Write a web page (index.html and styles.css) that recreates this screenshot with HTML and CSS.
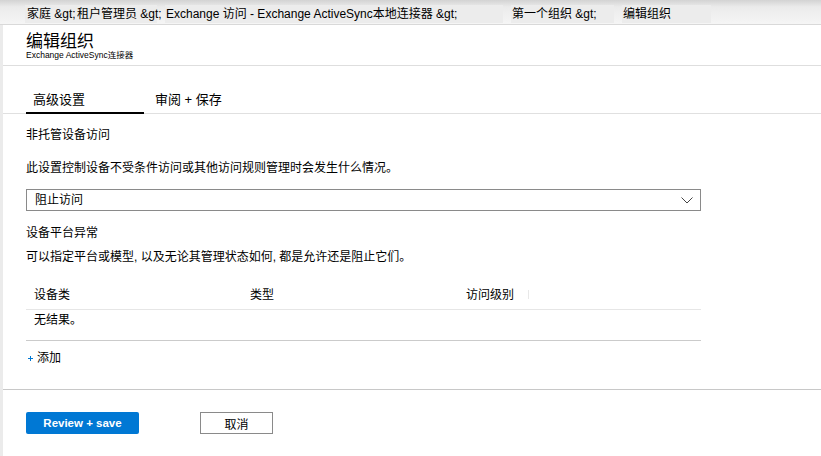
FILE: index.html
```html
<!DOCTYPE html>
<html lang="zh-CN">
<head>
<meta charset="utf-8">
<title>编辑组织</title>
<link rel="stylesheet" href="styles.css">
</head>
<body>
<div class="topbar">
  <nav class="crumbs">
    <span class="crumb c1">家庭 &amp;gt;</span>
    <span class="crumb c2">租户管理员 &amp;gt;</span>
    <span class="crumb c3">Exchange 访问 - Exchange ActiveSync本地连接器 &amp;gt;</span>
    <span class="crumb c4">第一个组织 &amp;gt;</span>
    <span class="crumb c5">编辑组织</span>
  </nav>
</div>
<main class="panel">
  <header class="title-block">
    <h1 class="title">编辑组织</h1>
    <p class="subtitle">Exchange ActiveSync连接器</p>
  </header>
  <div class="tabs">
    <div class="tab active">高级设置</div>
    <div class="tab">审阅 + 保存</div>
  </div>
  <section class="content">
    <div class="section-title">非托管设备访问</div>
    <div class="desc">此设置控制设备不受条件访问或其他访问规则管理时会发生什么情况。</div>
    <div class="select">
      <span>阻止访问</span>
      <svg class="chev" width="12" height="7" viewBox="0 0 12 7"><polyline points="0.5,0.5 6,6 11.5,0.5" fill="none" stroke="#444" stroke-width="1"/></svg>
    </div>
    <div class="section-title2">设备平台异常</div>
    <div class="desc2">可以指定平台或模型, 以及无论其管理状态如何, 都是允许还是阻止它们。</div>
    <div class="table">
      <div class="thead">
        <div class="cell">设备类</div>
        <div class="cell">类型</div>
        <div class="cell">访问级别<span class="divider"></span></div>
      </div>
      <div class="trow">
        <div class="cell">无结果。</div>
      </div>
    </div>
    <div class="add">
      <svg class="plus" width="5" height="5" viewBox="0 0 5 5"><path d="M2.5 0V5M0 2.5H5" stroke="#0078d4" stroke-width="1"/></svg>
      <span>添加</span>
    </div>
  </section>
  <footer class="actions">
    <button class="btn primary">Review + save</button>
    <button class="btn secondary">取消</button>
  </footer>
</main>
</body>
</html>
```

FILE: styles.css
```css
* { box-sizing: border-box; }
html, body {
  margin: 0;
  padding: 0;
  background: #fff;
  color: #000;
  font-family: "Liberation Sans", "Noto Sans CJK SC", sans-serif;
  font-size: 12px;
}
.topbar {
  height: 25px;
  border-bottom: 1px solid #d9d9d9;
  background: linear-gradient(#d3d3d3 0, #ebebeb 7px, #f5f5f5 100%);
}
.crumbs {
  display: flex;
  padding: 5px 0 0 25px;
}
.crumb {
  display: block;
  height: 18px;
  line-height: 18px;
  padding-left: 2px;
  background: #ececec;
  white-space: nowrap;
  font-size: 12px;
}
.c1 { width: 50px; }
.c2 { width: 82px; }
.c3 { width: 338px; margin-left: 8px; padding-left: 1px; }
.c4 { width: 103px; margin-left: 8px; padding-left: 1px; }
.c5 { width: 89px; margin-left: 8px; padding-left: 1px; }

.panel {
  border-left: 3px solid #ebebeb;
  min-height: 431px;
}
.title-block {
  height: 41px;
  padding: 8px 0 0 23px;
  border-bottom: 1px solid #dedede;
}
.title {
  margin: 0;
  font-size: 17px;
  font-weight: normal;
  line-height: 18px;
}
.subtitle {
  margin: 0;
  font-size: 8.5px;
  line-height: 9px;
  white-space: nowrap;
}
.tabs {
  display: flex;
  align-items: flex-end;
  padding: 25px 0 0 23px;
  border-bottom: 1px solid #e0e0e0;
}
.tab {
  font-size: 13px;
  line-height: 18px;
  padding-bottom: 3px;
  white-space: nowrap;
}
.tab.active {
  width: 118px;
  padding-left: 7px;
  border-bottom: 2px solid #000;
  margin-bottom: -1px;
}
.tab + .tab {
  margin-left: 11px;
  padding-bottom: 4px;
}
.content {
  padding-left: 23px;
  width: 698px;
}
.section-title {
  margin-top: 12px;
  line-height: 18px;
}
.desc {
  margin-top: 15px;
  line-height: 18px;
}
.select {
  margin-top: 12px;
  height: 22px;
  border: 1px solid #8a8a8a;
  display: flex;
  align-items: center;
  justify-content: space-between;
  padding: 0 7px 0 8px;
  line-height: 18px;
}
.chev { display: block; margin-top: 1px; }
.section-title2 {
  margin-top: 13px;
  line-height: 18px;
}
.desc2 {
  margin-top: 6px;
  line-height: 18px;
}
.table { margin-top: 14px; }
.thead {
  display: grid;
  grid-template-columns: 216px 216px 216px;
  height: 30px;
  align-items: center;
  border-bottom: 1px solid #e6e6e6;
}
.thead .cell {
  padding-left: 8px;
  line-height: 18px;
  display: flex;
  align-items: center;
}
.divider {
  display: block;
  width: 1px;
  height: 9px;
  background: #e8e8e8;
  margin-left: 14px;
}
.trow {
  height: 31px;
  border-bottom: 1px solid #cbcbcb;
  padding: 1px 0 0 8px;
  line-height: 18px;
}
.add {
  margin-top: 8px;
  display: flex;
  align-items: center;
  line-height: 18px;
}
.plus { display: block; margin: 1px 4px 0 2px; }
.actions {
  margin-top: 22px;
  border-top: 1px solid #c8c8c8;
  padding: 22px 0 0 23px;
  display: flex;
}
.btn {
  height: 22px;
  margin: 0;
  padding: 0;
  font-family: inherit;
  cursor: pointer;
}
.primary {
  width: 113px;
  background: #0078d4;
  color: #fff;
  border: none;
  border-radius: 2px;
  font-weight: bold;
  font-size: 11.5px;
}
.secondary {
  margin-left: 61px;
  width: 73px;
  background: #fff;
  color: #000;
  border: 1px solid #8a8a8a;
  font-size: 12px;
}
```
